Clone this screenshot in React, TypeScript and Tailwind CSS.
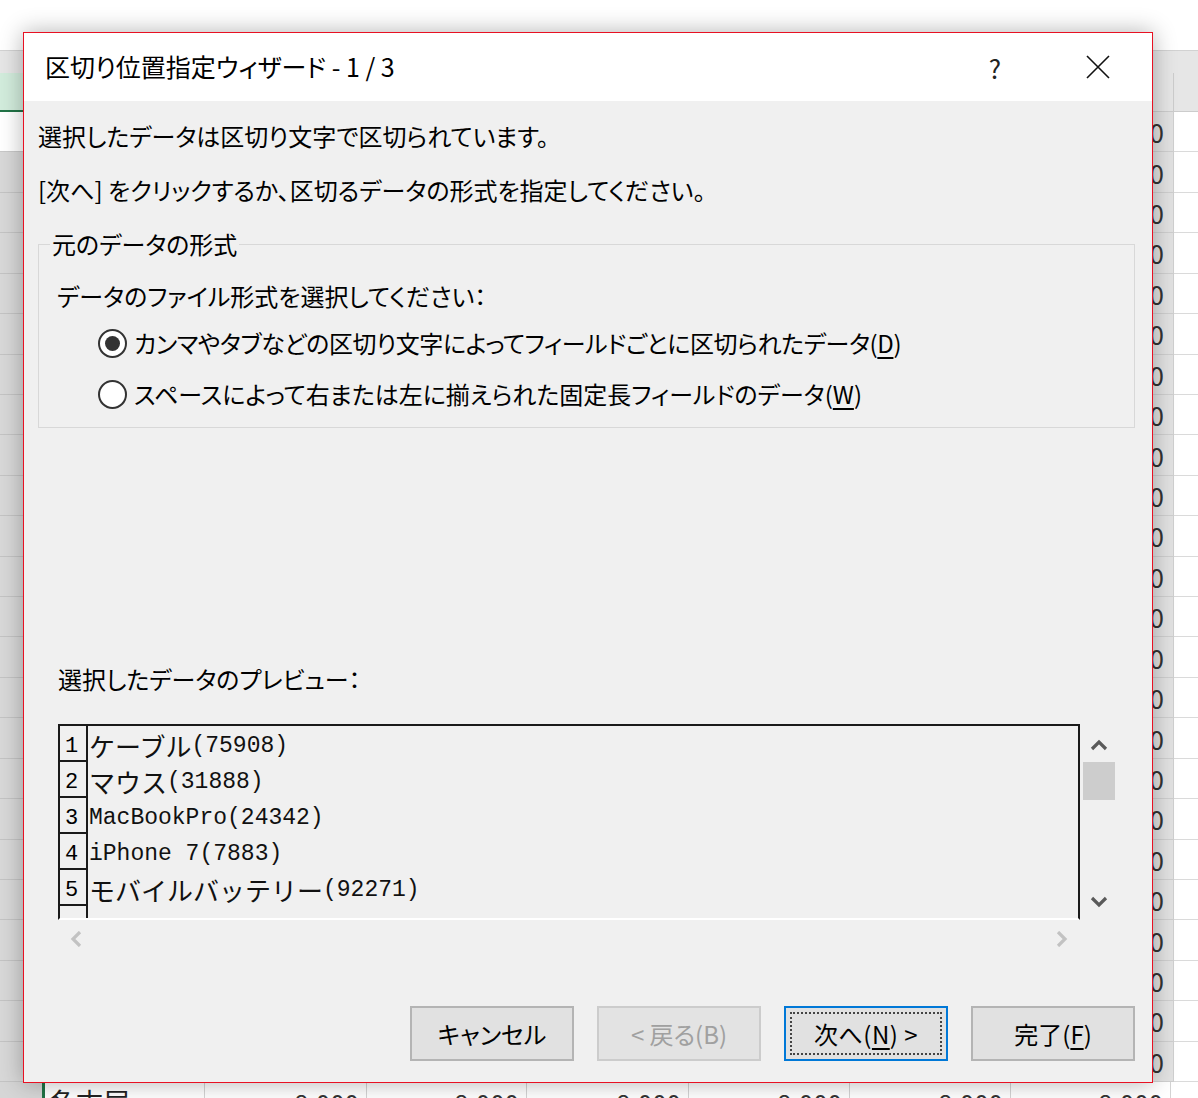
import React from "react";

// widths of the sheet columns behind the dialog
const colWidths = [162, 162, 160, 162, 161, 161, 160];

const previewRows = [
  { no: "1", kana: "ケーブル", rest: "(75908)" },
  { no: "2", kana: "マウス", rest: "(31888)" },
  { no: "3", kana: "", rest: "MacBookPro(24342)" },
  { no: "4", kana: "", rest: "iPhone 7(7883)" },
  { no: "5", kana: "モバイルバッテリー", rest: "(92271)" },
];

const SheetRow = ({ index }: { index: number }) => {
  return (
    <div className="flex flex-1 min-h-0">
      <div
        className={
          index === 0
            ? "w-[46px] shrink-0 bg-white border-b border-[#c8c8c8]"
            : "w-[46px] shrink-0 bg-[#d8d8d8] border-b border-[#c4c4c4]"
        }
      />
      {colWidths.map((w, i) => (
        <div
          key={i}
          style={{ width: w }}
          className="shrink-0 bg-[#e2e2e2] border-r border-b border-[#cfcfcf] flex items-center justify-end pr-[9px] text-[26px] text-[#333] overflow-hidden"
        >
          {i > 0 ? "8,000" : ""}
        </div>
      ))}
      <div className="flex-1 bg-white border-b border-[#dadada]" />
    </div>
  );
};

const Sheet = () => {
  return (
    <div className="w-[1198px] h-[1098px] flex flex-col font-['Noto_Sans_CJK_JP',sans-serif]">
      <div className="h-[50px] shrink-0 bg-white" />
      <div className="h-[23px] shrink-0 bg-[#e6e6e6] border-t border-[#d2d2d2]" />
      <div className="h-[39px] shrink-0 flex">
        <div className="w-[46px] shrink-0 bg-[#d2ecdc] border-b-2 border-[#217346]" />
        {colWidths.map((w, i) => (
          <div
            key={i}
            style={{ width: w }}
            className="shrink-0 bg-[#e6e6e6] border-r border-b border-[#cccccc]"
          />
        ))}
        <div className="flex-1 bg-[#e6e6e6] border-b border-[#cccccc]" />
      </div>
      <div className="h-[970px] shrink-0 flex flex-col">
        {Array.from({ length: 24 }).map((_, i) => (
          <SheetRow key={i} index={i} />
        ))}
      </div>
      <div className="h-[40px] shrink-0 flex">
        <div className="w-[45px] shrink-0 bg-[#d6d6d6] border-r-[3px] border-[#217346]" />
        <div className="w-[160px] shrink-0 bg-white border-r border-[#d4d4d4] flex items-center pl-[4px] text-[27px] text-[#222]">
          名古屋
        </div>
        {colWidths.slice(1).map((w, i) => (
          <div
            key={i}
            style={{ width: w }}
            className="shrink-0 bg-white border-r border-[#d4d4d4] flex items-center justify-end pr-[7px] text-[26px] text-[#333]"
          >
            8,000
          </div>
        ))}
        <div className="flex-1 bg-white" />
      </div>
    </div>
  );
};

const Radio = ({ checked }: { checked?: boolean }) => (
  <span className="w-[29px] h-[29px] rounded-full border-2 border-[#333] bg-white flex items-center justify-center shrink-0">
    {checked && <span className="w-[15px] h-[15px] rounded-full bg-[#333]" />}
  </span>
);

const Chevron = ({ dir, color }: { dir: "up" | "down" | "left" | "right"; color: string }) => {
  const pts = {
    up: "2,11 9,4 16,11",
    down: "2,4 9,11 16,4",
    left: "12,1 5,8 12,15",
    right: "5,1 12,8 5,15",
  }[dir];
  const vertical = dir === "up" || dir === "down";
  return (
    <svg
      width={vertical ? 18 : 17}
      height={vertical ? 15 : 16}
      viewBox={vertical ? "0 0 18 15" : "0 0 17 16"}
      fill="none"
    >
      <polyline points={pts} stroke={color} strokeWidth={3.2} />
    </svg>
  );
};

const Button = ({
  children,
  disabled,
  focused,
}: {
  children: React.ReactNode;
  disabled?: boolean;
  focused?: boolean;
}) => {
  if (focused) {
    return (
      <button className="w-[164px] h-[55px] border-2 border-[#0078d7] bg-[#e1e1e1] p-[4px] flex">
        <span className="flex-1 border-2 border-dotted border-[#444] flex items-center justify-center text-black tracking-[0.5px]">
          {children}
        </span>
      </button>
    );
  }
  return (
    <button
      className={
        disabled
          ? "w-[164px] h-[55px] border-2 border-[#cccccc] bg-[#e3e3e3] flex items-center justify-center text-[#a0a0a0]"
          : "w-[164px] h-[55px] border-2 border-[#b4b4b4] bg-[#e1e1e1] flex items-center justify-center text-black"
      }
    >
      {children}
    </button>
  );
};

export default function App() {
  return (
    <div className="relative w-[1198px] h-[1098px] overflow-hidden bg-white">
      <Sheet />

      <div className="absolute left-[23px] top-[32px] w-[1130px] h-[1051px] border border-[#e81123] bg-[#f0f0f0] shadow-[0_0_22px_rgba(0,0,0,0.3)] flex flex-col font-['Noto_Sans_CJK_JP',sans-serif] text-[24px] text-black [font-feature-settings:'palt']">
        {/* title bar */}
        <div className="h-[68px] shrink-0 bg-white flex items-center pl-[21px]">
          <span className="text-[25px]">区切り位置指定ウィザード - 1 / 3</span>
          <span className="ml-auto w-[30px] text-center text-[26px] text-[#222]">?</span>
          <span className="ml-[76px] mr-[42px] w-[24px] h-[24px]">
            <svg width="24" height="24" viewBox="0 0 24 24">
              <path d="M1 1 L23 23 M23 1 L1 23" stroke="#111" strokeWidth="1.6" />
            </svg>
          </span>
        </div>

        {/* body */}
        <div className="flex-1 flex flex-col">
          <div className="ml-[14px] mt-[17px] h-[36px] flex items-center">
            選択したデータは区切り文字で区切られています。
          </div>
          <div className="ml-[14px] mt-[18px] h-[36px] flex items-center">
            [次へ] をクリックするか、区切るデータの形式を指定してください。
          </div>

          <fieldset className="ml-[14px] mt-[18px] w-[1097px] border border-[#d8d8d8] pb-[13px]">
            <legend className="ml-[11px] px-[2px] leading-[36px]">元のデータの形式</legend>
            <div className="pl-[18px]">
              <div className="mt-[16px] h-[36px] flex items-center">
                データのファイル形式を選択してください：
              </div>
              <div className="mt-[9px] h-[40px] flex items-center pl-[41px] gap-[7px]">
                <Radio checked />
                <span className="tracking-[-0.4px]">
                  カンマやタブなどの区切り文字によってフィールドごとに区切られたデータ(<span className="underline underline-offset-4">D</span>)
                </span>
              </div>
              <div className="mt-[11px] h-[40px] flex items-center pl-[41px] gap-[7px]">
                <Radio />
                <span>
                  スペースによって右または左に揃えられた固定長フィールドのデータ(<span className="underline underline-offset-4">W</span>)
                </span>
              </div>
            </div>
          </fieldset>

          <div className="ml-[34px] mt-[233px] h-[36px] flex items-center">
            選択したデータのプレビュー：
          </div>

          {/* preview */}
          <div className="ml-[34px] mt-[27px] flex">
            <div className="w-[1022px] h-[196px] border-2 border-[#1a1a1a] border-b-white overflow-hidden flex flex-col [font-feature-settings:normal]">
              {previewRows.map((r) => (
                <div key={r.no} className="h-[36px] shrink-0 flex">
                  <div className="w-[28px] shrink-0 border-r-2 border-b-2 border-[#1a1a1a] flex items-end pl-[5px] font-['Liberation_Mono',monospace] text-[22px] leading-[26px]">
                    {r.no}
                  </div>
                  <div className="flex items-end pl-px font-['Liberation_Mono','Noto_Sans_CJK_JP',monospace] text-[23px] leading-[32px] text-[#111] whitespace-pre">
                    {r.kana && (
                      <span className="font-['Noto_Sans_CJK_JP',sans-serif] text-[26px]">
                        {r.kana}
                      </span>
                    )}
                    <span>{r.rest}</span>
                  </div>
                </div>
              ))}
              <div className="flex-1 flex">
                <div className="w-[28px] shrink-0 border-r-2 border-[#1a1a1a]" />
              </div>
            </div>
            <div className="w-[36px] h-[196px] flex flex-col items-center pl-[2px]">
              <div className="mt-[14px]">
                <Chevron dir="up" color="#5a5a5a" />
              </div>
              <div className="mt-[9px] w-[32px] h-[38px] bg-[#cdcdcd]" />
              <div className="mt-auto mb-[11px]">
                <Chevron dir="down" color="#5a5a5a" />
              </div>
            </div>
          </div>
          <div className="ml-[34px] w-[1022px] h-[38px] flex items-center justify-between px-[10px]">
            <Chevron dir="left" color="#c2c2c2" />
            <Chevron dir="right" color="#c2c2c2" />
          </div>

          {/* buttons */}
          <div className="mt-[48px] mr-[17px] flex justify-end gap-[23px]">
            <Button>キャンセル</Button>
            <Button disabled>&lt; 戻る(B)</Button>
            <Button focused>
              次へ(<span className="underline underline-offset-4">N</span>)&nbsp;&gt;
            </Button>
            <Button>
              完了(<span className="underline underline-offset-4">F</span>)
            </Button>
          </div>
        </div>
      </div>
    </div>
  );
}
